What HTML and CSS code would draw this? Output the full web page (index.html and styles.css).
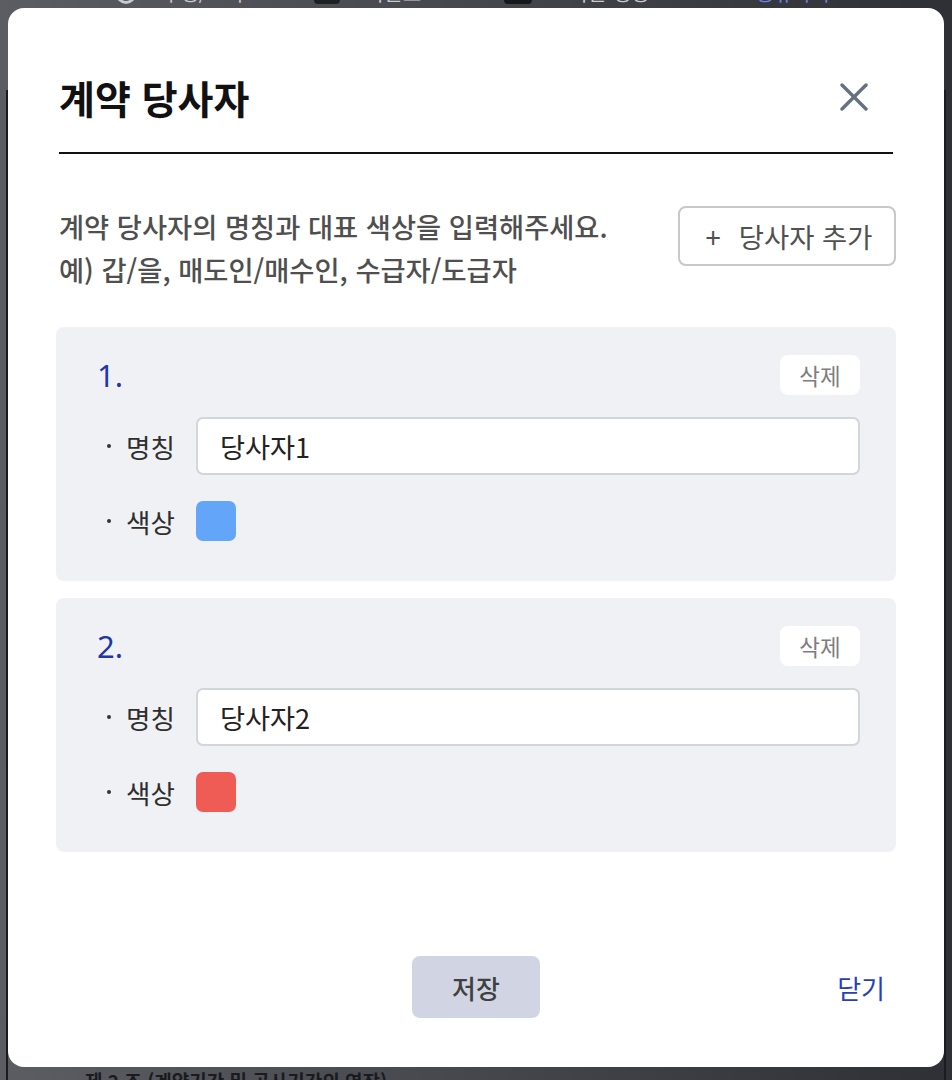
FILE: index.html
```html
<!DOCTYPE html>
<html lang="ko">
<head>
<meta charset="utf-8">
<title>계약 당사자</title>
<link rel="stylesheet" href="styles.css">
</head>
<body>
<div class="page">
  <div class="toolbar">
    <span class="tool"><i class="ico ico-search"></i>수정/조회</span>
    <span class="tool"><i class="ico ico-pin"></i>다운로드</span>
    <span class="tool"><i class="ico ico-square"></i>사본 생성</span>
    <span class="tool tool-blue">공유하기</span>
  </div>
  <div class="doc">
    <p class="article">제 2 조 (계약기간 및 공사기간의 연장)</p>
  </div>
</div>

<div class="overlay">
  <div class="modal">
    <div class="modal-header">
      <h1 class="modal-title">계약 당사자</h1>
      <button class="close-btn" aria-label="닫기">
        <svg width="28" height="28" viewBox="0 0 28 28" fill="none" stroke="#667080" stroke-width="3.4" stroke-linecap="round">
          <line x1="2" y1="2" x2="26" y2="26"/>
          <line x1="26" y1="2" x2="2" y2="26"/>
        </svg>
      </button>
    </div>

    <div class="intro">
      <p class="intro-text">계약 당사자의 명칭과 대표 색상을 입력해주세요.<br>예) 갑/을, 매도인/매수인, 수급자/도급자</p>
      <button class="add-btn"><span class="plus">+</span>당사자 추가</button>
    </div>

    <div class="party-list">
      <div class="party-card">
        <div class="party-head">
          <span class="party-num">1.</span>
          <button class="del-btn">삭제</button>
        </div>
        <div class="party-row">
          <span class="row-label"><i class="dot"></i>명칭</span>
          <div class="text-input">당사자1</div>
        </div>
        <div class="party-row">
          <span class="row-label"><i class="dot"></i>색상</span>
          <span class="swatch swatch-blue"></span>
        </div>
      </div>

      <div class="party-card">
        <div class="party-head">
          <span class="party-num">2.</span>
          <button class="del-btn">삭제</button>
        </div>
        <div class="party-row">
          <span class="row-label"><i class="dot"></i>명칭</span>
          <div class="text-input">당사자2</div>
        </div>
        <div class="party-row">
          <span class="row-label"><i class="dot"></i>색상</span>
          <span class="swatch swatch-red"></span>
        </div>
      </div>
    </div>

    <div class="modal-footer">
      <span></span>
      <button class="save-btn">저장</button>
      <button class="close-link">닫기</button>
    </div>
  </div>
</div>
</body>
</html>
```

FILE: styles.css
```css
* { box-sizing: border-box; }

html, body {
  margin: 0;
  padding: 0;
  height: 100%;
}

body {
  font-family: "Noto Sans CJK KR", "Noto Sans", sans-serif;
  background: linear-gradient(to right, #5b5d62 0%, #45474c 50%, #2e3035 100%);
  overflow: hidden;
}

.page {
  height: 1080px;
  overflow: hidden;
}

.toolbar {
  height: 111px;
  margin-top: -21px;
  display: flex;
  align-items: flex-start;
  padding-left: 116px;
  font-size: 20px;
  line-height: 28px;
  color: #c9cacd;
}

.tool {
  display: flex;
  align-items: flex-end;
  height: 28px;
}

.tool:nth-child(1) { width: 194px; }
.tool:nth-child(2) { width: 194px; }
.tool:nth-child(3) { width: 252px; }

.ico {
  display: inline-block;
  margin-right: 26px;
  margin-bottom: 3px;
}

.ico-search {
  width: 20px;
  height: 20px;
  border: 3px solid #c9cacd;
  border-radius: 50%;
}

.ico-pin {
  width: 26px;
  height: 22px;
  background: #1f2023;
  border-radius: 4px;
  margin-left: 4px;
}

.ico-square {
  width: 28px;
  height: 24px;
  background: #17181a;
  border-radius: 4px;
  margin-right: 38px;
}

.tool-blue { color: #6d85dc; }

.doc {
  margin: 0 6px;
  height: 1200px;
  border-left: 2px solid #1b1c1f;
  border-right: 2px solid #1b1c1f;
  padding-top: 978px;
}

.article {
  margin: 0;
  padding-left: 77px;
  font-size: 19px;
  font-weight: 700;
  line-height: 26px;
  color: #1a1b1e;
}

.overlay {
  position: fixed;
  inset: 0;
}

.modal {
  margin: 8px 0 0 8px;
  width: 936px;
  height: 1059px;
  background: #ffffff;
  border-radius: 16px;
  padding: 0 48px;
}

.modal-header {
  margin: 0 3px;
  padding-top: 65px;
  padding-bottom: 31px;
  border-bottom: 2px solid #111111;
  display: flex;
  align-items: center;
  justify-content: space-between;
}

.modal-title {
  margin: 0;
  font-size: 39px;
  font-weight: 700;
  line-height: 48px;
  color: #111111;
}

.close-btn {
  border: 0;
  background: none;
  padding: 0;
  margin-right: 25px;
  width: 28px;
  height: 28px;
  display: flex;
}

.intro {
  margin-top: 51px;
  display: flex;
  justify-content: space-between;
  align-items: flex-start;
}

.intro-text {
  margin: 0;
  margin-left: 3px;
  font-size: 27.3px;
  line-height: 43px;
  color: #4f4f4f;
  font-weight: 500;
}

.add-btn {
  margin-top: 1px;
  width: 218px;
  height: 60px;
  border: 2px solid #c8c8c8;
  border-radius: 8px;
  background: #ffffff;
  font-family: inherit;
  font-size: 27.4px;
  color: #505050;
  display: flex;
  align-items: center;
  justify-content: center;
  padding: 0 0 0 4px;
}

.plus {
  margin-right: 18px;
}

.party-list {
  margin-top: 36px;
  display: flex;
  flex-direction: column;
  gap: 17px;
}

.party-card {
  background: #f0f1f5;
  border-radius: 8px;
  padding: 28px 36px 40px 41px;
}

.party-head {
  height: 40px;
  display: flex;
  align-items: center;
  justify-content: space-between;
  margin-bottom: 22px;
}

.party-num {
  font-family: "Noto Sans", "Noto Sans CJK KR", sans-serif;
  font-size: 31px;
  font-weight: 400;
  line-height: 40px;
  color: #2236a6;
}

.del-btn {
  width: 80px;
  height: 40px;
  border: 0;
  border-radius: 8px;
  background: #ffffff;
  font-family: inherit;
  font-size: 22.5px;
  color: #7d7d7d;
  padding: 0;
}

.party-row {
  display: flex;
  align-items: center;
}

.party-row + .party-row {
  margin-top: 26px;
}

.row-label {
  width: 99px;
  flex: none;
  display: flex;
  align-items: center;
  font-size: 26.6px;
  color: #2e2e2e;
}

.dot {
  width: 4px;
  height: 4px;
  border-radius: 50%;
  background: #333333;
  margin-left: 10px;
  margin-right: 15px;
}

.text-input {
  flex: 1;
  height: 58px;
  border: 2px solid #d2d5da;
  border-radius: 7px;
  background: #ffffff;
  padding-left: 22px;
  display: flex;
  align-items: center;
  font-size: 27.2px;
  color: #222222;
}

.swatch {
  width: 40px;
  height: 40px;
  border-radius: 7px;
}

.swatch-blue { background: #62a5f9; }
.swatch-red { background: #ef5b55; }

.modal-footer {
  margin-top: 104px;
  display: grid;
  grid-template-columns: 1fr auto 1fr;
  align-items: center;
}

.save-btn {
  width: 128px;
  height: 62px;
  border: 0;
  border-radius: 8px;
  background: #d1d5e3;
  font-family: inherit;
  font-size: 26px;
  font-weight: 500;
  color: #404040;
  padding: 0;
}

.close-link {
  justify-self: end;
  margin-right: 11px;
  border: 0;
  background: none;
  padding: 0;
  font-family: inherit;
  font-size: 26px;
  color: #2a3fb6;
}
```
